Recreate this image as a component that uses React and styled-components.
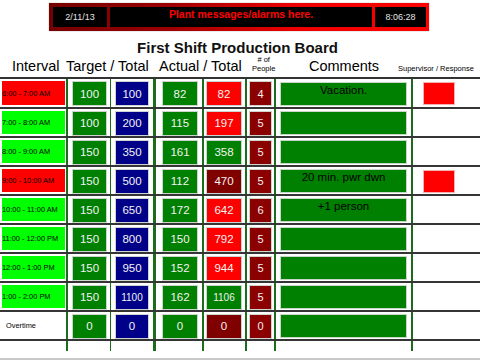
import React from 'react';
import styled, { createGlobalStyle } from 'styled-components';

const GlobalStyle = createGlobalStyle`
  html, body { margin: 0; padding: 0; background: #fff; }
  body { font-family: "Liberation Sans", Arial, sans-serif; }
`;

const Page = styled.div`
  width: 480px;
  height: 360px;
  overflow: hidden;
  background: #fff;
  display: flex;
  flex-direction: column;
`;

const TopBar = styled.div`
  margin: 3px 0 0 49px;
  width: 380px;
  height: 28px;
  box-sizing: border-box;
  padding: 4px 3px 4px 4px;
  display: flex;
  gap: 3px;
  background: linear-gradient(to right, #760000 0%, #9a0000 30%, #ee0000 65%, #ff0000 100%);
  box-shadow: 0 0 1px 0 rgba(0, 0, 0, 0.45);
`;

const BarCell = styled.div`
  background: #000;
  width: ${(p) => (p.$w ? `${p.$w}px` : 'auto')};
  flex: ${(p) => (p.$w ? '0 0 auto' : '1 1 auto')};
  display: flex;
  justify-content: center;
  align-items: ${(p) => (p.$top ? 'flex-start' : 'center')};
  padding-top: ${(p) => (p.$top ? '1px' : '0')};
  box-sizing: border-box;
  color: ${(p) => (p.$alert ? '#ff0000' : '#e4e4e4')};
  font-size: ${(p) => (p.$alert ? '10.5px' : '9px')};
  font-weight: ${(p) => (p.$alert ? 700 : 400)};
  line-height: 12px;
`;

const Title = styled.h1`
  margin: 8px 0 0;
  padding-right: 5px;
  height: 17px;
  font-size: 15px;
  line-height: 17px;
  font-weight: 700;
  text-align: center;
  color: #111;
`;

const HeaderRow = styled.div`
  height: 21px;
  box-sizing: border-box;
  padding-left: 12px;
  display: grid;
  grid-template-columns: 54px 93px 93px 57px 89px auto;
  align-items: end;
`;

const HeaderLabel = styled.div`
  white-space: nowrap;
  color: #000;
  text-align: ${(p) => (p.$small ? 'center' : 'left')};
  font-size: ${(p) => (p.$small ? '7.5px' : '14.5px')};
  line-height: ${(p) => (p.$small ? '8.5px' : '16px')};
  padding-bottom: ${(p) => (p.$pb ?? 3)}px;
  justify-self: start;
`;

const Table = styled.div`
  border-top: 2px solid #333;
`;

const COLS = '68px 43px 45px 48px 43px 29px 137px 1fr';

const Row = styled.div`
  display: grid;
  grid-template-columns: ${COLS};
  height: ${(p) => p.$h}px;
  box-sizing: border-box;
  border-bottom: ${(p) => (p.$open ? 'none' : '2px solid #353535')};
`;

const Cell = styled.div`
  display: flex;
  align-items: center;
  box-sizing: border-box;
  padding-left: ${(p) => p.$pl || 0}px;
  border-right: ${(p) => (p.$line ? `${p.$line}px solid #1d6b1d` : 'none')};
  min-width: 0;
`;

const IntervalBlock = styled.div`
  align-self: stretch;
  flex: 1;
  margin: 2px 1px 2px 2px;
  background: ${(p) => p.$bg};
  display: flex;
  align-items: center;
  padding-left: ${(p) => (p.$bg === '#ffffff' ? 4 : 0)}px;
  font-size: 7.4px;
  color: #000;
  white-space: nowrap;
  overflow: hidden;
`;

const NumBox = styled.div`
  width: ${(p) => p.$w}px;
  height: 25px;
  margin-top: 1px;
  box-sizing: border-box;
  background: ${(p) => p.$bg};
  border: 1px solid #cdd3cd;
  color: #f3f3f3;
  font-size: ${(p) => p.$fs}px;
  display: flex;
  align-items: center;
  justify-content: center;
`;

const CommentBox = styled.div`
  width: 127px;
  height: 24px;
  margin-top: 1px;
  box-sizing: border-box;
  background: #008000;
  border: 1px solid #c9d6c9;
  color: #000;
  font-size: 11.5px;
  line-height: 13px;
  padding-top: 1px;
  text-align: center;
  white-space: nowrap;
`;

const FlagBox = styled.div`
  width: 32px;
  height: 23px;
  margin-top: 1px;
  box-sizing: border-box;
  background: #ff0000;
  border: 1px solid #f3b0b0;
`;

const GreyRule = styled.div`
  margin-top: 7px;
  height: 2px;
  background: #c8c8c8;
`;

const RED = '#ff0000';
const LIME = '#00ff00';
const GREEN = '#008000';
const BLUE = '#000088';
const MAROON = '#800000';
const PEOPLE = '#8b0000';

const rows = [
  { t: '6:00 - 7:00 AM', bg: RED, target: 100, tt: 100, act: 82, at: 82, atc: RED, ppl: 4, note: 'Vacation.', flag: true },
  { t: '7:00 - 8:00 AM', bg: LIME, target: 100, tt: 200, act: 115, at: 197, atc: RED, ppl: 5 },
  { t: '8:00 - 9:00 AM', bg: LIME, target: 150, tt: 350, act: 161, at: 358, atc: GREEN, ppl: 5 },
  { t: '9:00 - 10:00 AM', bg: RED, target: 150, tt: 500, act: 112, at: 470, atc: MAROON, ppl: 5, note: '20 min. pwr dwn', flag: true },
  { t: '10:00 - 11:00 AM', bg: LIME, target: 150, tt: 650, act: 172, at: 642, atc: RED, ppl: 6, note: '+1 person' },
  { t: '11:00 - 12:00 PM', bg: LIME, target: 150, tt: 800, act: 150, at: 792, atc: RED, ppl: 5 },
  { t: '12:00 - 1:00 PM', bg: LIME, target: 150, tt: 950, act: 152, at: 944, atc: RED, ppl: 5 },
  { t: '1:00 - 2:00 PM', bg: LIME, target: 150, tt: 1100, act: 162, at: 1106, atc: GREEN, ppl: 5 },
  { t: 'Overtime', bg: '#ffffff', target: 0, tt: 0, act: 0, at: 0, atc: MAROON, ppl: 0 },
];

const fs = (n) => (String(n).length >= 4 ? 10 : 11.5);

function Num({ w, bg, value, size }) {
  return (
    <NumBox $w={w} $bg={bg} $fs={size ?? fs(value)}>
      {value}
    </NumBox>
  );
}

export default function App() {
  return (
    <>
      <GlobalStyle />
      <Page>
        <TopBar>
          <BarCell $w={54}>2/11/13</BarCell>
          <BarCell $alert $top>Plant messages/alarms here.</BarCell>
          <BarCell $w={51}>8:06:28</BarCell>
        </TopBar>
        <Title>First Shift Production Board</Title>
        <HeaderRow>
          <HeaderLabel>Interval</HeaderLabel>
          <HeaderLabel>Target / Total</HeaderLabel>
          <HeaderLabel>Actual / Total</HeaderLabel>
          <HeaderLabel $small $pb={4}>
            # of
            <br />
            People
          </HeaderLabel>
          <HeaderLabel>Comments</HeaderLabel>
          <HeaderLabel $small $pb={4}>Supervisor / Response</HeaderLabel>
        </HeaderRow>
        <Table>
          {rows.map((r, i) => (
            <Row key={r.t} $h={i === 0 ? 30 : 29}>
              <Cell $line={2}>
                <IntervalBlock $bg={r.bg}>{r.t}</IntervalBlock>
              </Cell>
              <Cell $line={1} $pl={4}>
                <Num w={35} bg={GREEN} value={r.target} />
              </Cell>
              <Cell $line={3} $pl={4}>
                <Num w={34} bg={BLUE} value={r.tt} />
              </Cell>
              <Cell $line={2} $pl={6}>
                <Num w={36} bg={GREEN} value={r.act} />
              </Cell>
              <Cell $line={2} $pl={2}>
                <Num w={36} bg={r.atc} value={r.at} />
              </Cell>
              <Cell $line={2} $pl={2}>
                <Num w={23} bg={PEOPLE} value={r.ppl} size={11} />
              </Cell>
              <Cell $line={2} $pl={4}>
                <CommentBox>{r.note || ''}</CommentBox>
              </Cell>
              <Cell $pl={10}>{r.flag && <FlagBox />}</Cell>
            </Row>
          ))}
          <Row $h={10} $open>
            <Cell $line={2} />
            <Cell $line={1} />
            <Cell $line={3} />
            <Cell $line={2} />
            <Cell $line={2} />
            <Cell $line={2} />
            <Cell $line={2} />
            <Cell />
          </Row>
        </Table>
        <GreyRule />
      </Page>
    </>
  );
}
